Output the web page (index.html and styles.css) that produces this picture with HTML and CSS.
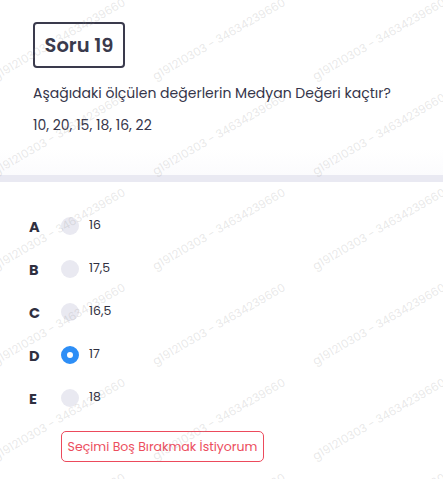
FILE: index.html
```html
<!DOCTYPE html>
<html lang="tr">
<head>
<meta charset="utf-8">
<title>Soru 19</title>
<link rel="stylesheet" href="styles.css">
</head>
<body>
<div class="page">
  <section class="question">
    <div class="badge">Soru 19</div>
    <p class="q-text">Aşağıdaki ölçülen değerlerin Medyan Değeri kaçtır?</p>
    <p class="q-data">10, 20, 15, 18, 16, 22</p>
  </section>
  <div class="sep"></div>
  <section class="options">
    <div class="opt"><span class="letter">A</span><span class="radio"></span><span class="val">16</span></div>
    <div class="opt"><span class="letter">B</span><span class="radio"></span><span class="val">17,5</span></div>
    <div class="opt"><span class="letter">C</span><span class="radio"></span><span class="val">16,5</span></div>
    <div class="opt"><span class="letter">D</span><span class="radio checked"></span><span class="val">17</span></div>
    <div class="opt"><span class="letter">E</span><span class="radio"></span><span class="val">18</span></div>
    <button class="skip">Seçimi Boş Bırakmak İstiyorum</button>
  </section>
  <div class="watermark" aria-hidden="true">
    <span>g191210303 - 34634239660</span><span>g191210303 - 34634239660</span><span>g191210303 - 34634239660</span>
    <span>g191210303 - 34634239660</span><span>g191210303 - 34634239660</span><span>g191210303 - 34634239660</span>
    <span>g191210303 - 34634239660</span><span>g191210303 - 34634239660</span><span>g191210303 - 34634239660</span>
    <span>g191210303 - 34634239660</span><span>g191210303 - 34634239660</span><span>g191210303 - 34634239660</span>
    <span>g191210303 - 34634239660</span><span>g191210303 - 34634239660</span><span>g191210303 - 34634239660</span>
    <span>g191210303 - 34634239660</span><span>g191210303 - 34634239660</span><span>g191210303 - 34634239660</span>
    <span>g191210303 - 34634239660</span><span>g191210303 - 34634239660</span><span>g191210303 - 34634239660</span>
  </div>
</div>
</body>
</html>
```

FILE: styles.css
```css
* { box-sizing: border-box; }
html, body { margin: 0; padding: 0; background: #fff; }
body {
  font-family: "Poppins", "Open Sans", "DejaVu Sans", sans-serif;
  color: #34344a;
  width: 443px;
  height: 479px;
  overflow: hidden;
}
.page {
  position: relative;
  width: 443px;
  height: 479px;
  overflow: hidden;
}
.question {
  height: 175px;
  padding: 22px 0 0 33px;
  background: linear-gradient(#ffffff 85%, #fbfbfd);
}
.badge {
  display: inline-flex;
  align-items: center;
  justify-content: center;
  width: 92px;
  height: 46px;
  border: 2px solid #3a3a4c;
  border-radius: 4px;
  font-size: 19.5px;
  font-weight: 600;
  color: #3a3a4c;
}
.q-text {
  margin: 15px 0 0;
  font-size: 14px;
  line-height: 20px;
  color: #35354a;
}
.q-data {
  margin: 12px 0 0;
  font-size: 14px;
  line-height: 20px;
  color: #35354a;
}
.sep {
  height: 7px;
  background: #e9e9f2;
}
.options {
  padding: 22px 0 0 29px;
  display: flex;
  flex-direction: column;
  align-items: flex-start;
}
.opt {
  display: flex;
  align-items: center;
  height: 43px;
}
.letter {
  width: 32px;
  font-size: 14.5px;
  font-weight: 700;
  color: #2f2f40;
  padding-top: 4px;
}
.radio {
  width: 18px;
  height: 18px;
  border-radius: 50%;
  background: #e9e9f1;
  flex: none;
}
.radio.checked {
  background: #ffffff;
  border: 6px solid #2d8ef6;
}
.val {
  margin-left: 10px;
  font-size: 12.5px;
  color: #2f2f40;
  margin-top: -2px;
}
.skip {
  margin: 12px 0 0 32px;
  width: 203px;
  height: 31px;
  border: 1px solid #ec4a5c;
  border-radius: 5px;
  background: transparent;
  font-family: inherit;
  font-size: 12.5px;
  color: #ec4d5d;
  padding: 0;
}
.watermark {
  position: absolute;
  top: -107px;
  left: -3px;
  display: grid;
  grid-template-columns: repeat(3, 160px);
  grid-auto-rows: 95px;
  pointer-events: none;
}
.watermark span {
  align-self: end;
  display: block;
  white-space: nowrap;
  font-family: "Poppins", "Open Sans", sans-serif;
  font-size: 11.5px;
  line-height: 14px;
  color: rgba(150, 150, 150, 0.22);
  transform-origin: 0 100%;
  transform: rotate(-30deg);
}
```
